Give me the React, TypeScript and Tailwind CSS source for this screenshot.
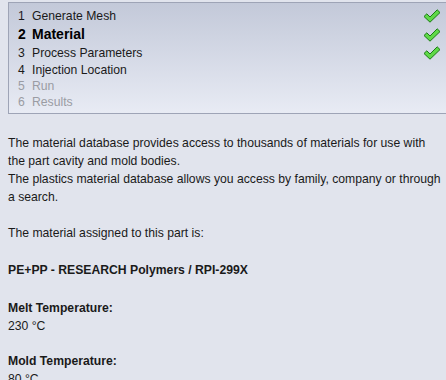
import React from "react";

const steps = [
  { n: "1", label: "Generate Mesh", state: "done", h: "h-[18px]" },
  { n: "2", label: "Material", state: "current", h: "h-[19px]" },
  { n: "3", label: "Process Parameters", state: "done", h: "h-[18px]" },
  { n: "4", label: "Injection Location", state: "todo", h: "h-[16px]" },
  { n: "5", label: "Run", state: "disabled", h: "h-[16px]" },
  { n: "6", label: "Results", state: "disabled", h: "h-[16px]" },
];

function Check() {
  return (
    <svg width="18" height="14" viewBox="0 0 18 14" className="shrink-0">
      <path
        d="M1 7.5 L3.8 4.8 L7 8 L14.2 0.8 L17 3.6 L7 13.2 Z"
        fill="#5fd948"
        stroke="#1c7a16"
        strokeWidth="1"
        strokeLinejoin="round"
      />
    </svg>
  );
}

export default function App() {
  return (
    <div
      className="w-[446px] h-[380px] overflow-hidden bg-[#e1e4ed] text-[12.2px] text-[#1a1a1a]"
      style={{ fontFamily: '"Liberation Sans", Arial, sans-serif' }}
    >
      {/* wizard step list */}
      <div className="mt-[2px] ml-[8px] h-[112px] border border-r-0 border-[#9ea4b6] bg-gradient-to-b from-[#c3c9d9] to-[#e8ebf4] pt-[4px] pl-[9px] pr-[5px]">
        {steps.map((s) => (
          <div
            key={s.n}
            className={
              s.h +
              " " +
              (s.state === "current"
                ? "flex items-center text-[14px] font-bold text-black"
                : s.state === "disabled"
                ? "flex items-center text-[#9a9ca3]"
                : "flex items-center text-[#1a1a1a]")
            }
          >
            <span className="w-[14px]">{s.n}</span>
            <span className="flex-1">{s.label}</span>
            {(s.state === "done" || s.state === "current") && <Check />}
          </div>
        ))}
      </div>

      {/* description */}
      <div className="pl-[8px] pt-[20px] leading-[18px] whitespace-nowrap">
        <div>The material database provides access to thousands of materials for use with</div>
        <div>the part cavity and mold bodies.</div>
        <div>The plastics material database allows you access by family, company or through</div>
        <div>a search.</div>
        <div className="h-[18px]" />
        <div>The material assigned to this part is:</div>
        <div className="h-[19px]" />
        <div className="font-bold">PE+PP - RESEARCH Polymers / RPI-299X</div>
        <div className="h-[20px]" />
        <div className="font-bold">Melt Temperature:</div>
        <div>230 °C</div>
        <div className="h-[17px]" />
        <div className="font-bold">Mold Temperature:</div>
        <div>80 °C</div>
      </div>
    </div>
  );
}
